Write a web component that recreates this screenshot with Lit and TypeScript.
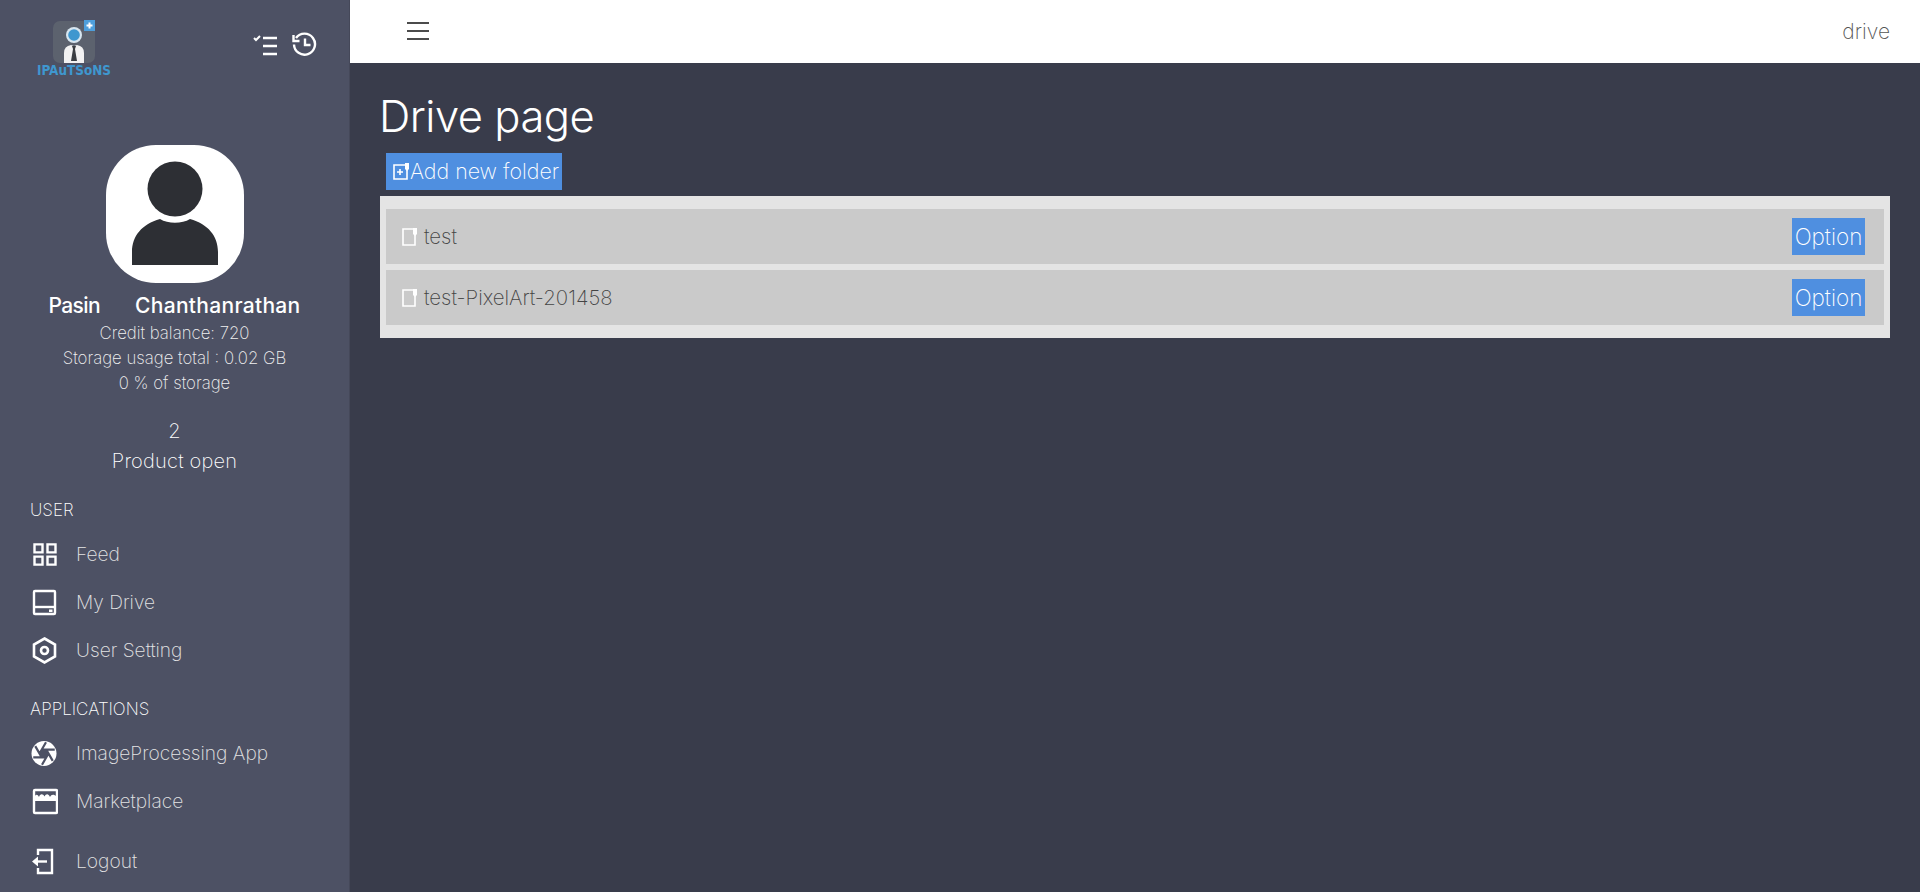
import { LitElement, html, css, svg } from 'lit'
import { customElement } from 'lit/decorators.js'

// aperture cuts: one tangent line per hexagon corner
const apertureCuts = [0, 60, 120, 180, 240, 300].map((deg) => {
  const a = (deg * Math.PI) / 180
  const b = a + (Math.PI * 2) / 3
  const x = 13 + 4.5 * Math.cos(a)
  const y = 13.5 + 4.5 * Math.sin(a)
  return `M${x.toFixed(2)} ${y.toFixed(2)}L${(x + 13 * Math.cos(b)).toFixed(2)} ${(y + 13 * Math.sin(b)).toFixed(2)}`
})

const icons = {
  feed: svg`<path d="M3.500 3.400h8v8h-8zM16.500 3.400h8v8h-8zM3.500 15.600h8v8h-8zM16.500 15.600h8v8h-8z" fill="none" stroke="currentColor" stroke-width="2.400"/>`,
  drive: svg`<rect x="3" y="2" width="21" height="23" rx="1" fill="none" stroke="currentColor" stroke-width="2.400"/><path d="M3 18h21" stroke="currentColor" stroke-width="2.400"/><rect x="18" y="20.500" width="3.500" height="2.500" fill="currentColor"/>`,
  setting: svg`<path d="M13.500 1.500l10.500 6v12l-10.500 6-10.500-6v-12z" fill="none" stroke="currentColor" stroke-width="2.600"/><circle cx="13.500" cy="13.500" r="3.500" fill="none" stroke="currentColor" stroke-width="2.600"/>`,
  aperture: svg`<circle cx="13" cy="13.500" r="12.500" fill="currentColor"/><path d="${apertureCuts.join('')}" stroke="#4d5164" stroke-width="2.200" fill="none"/><path d="M17.500 13.500l-2.250 3.900h-4.500L8.500 13.500l2.250-3.900h4.500z" fill="#4d5164"/>`,
  market: svg`<rect x="3" y="2" width="23" height="23" rx="1" fill="none" stroke="currentColor" stroke-width="2.400"/><path d="M3 13V9.500c1.500-3.500 3.500-3.500 5-.5 1-3.500 4-3.500 5.500-.5 1.500-3 4-3 5.500.5 1.500-3 3.500-3 7-.5V13z" fill="currentColor"/>`,
  logout: svg`<path d="M7 7V2h14v23H7v-5" fill="none" stroke="currentColor" stroke-width="2.400"/><path d="M16 13.500H6" stroke="currentColor" stroke-width="2.400"/><path d="M1 13.500l6-5v10z" fill="currentColor"/>`,
}

const menuUser = [
  { icon: icons.feed, label: 'Feed' },
  { icon: icons.drive, label: 'My Drive' },
  { icon: icons.setting, label: 'User Setting' },
]
const menuApps = [
  { icon: icons.aperture, label: 'ImageProcessing App' },
  { icon: icons.market, label: 'Marketplace' },
]
const folders = ['test', 'test-PixelArt-201458']

@customElement('app-root')
export class AppRoot extends LitElement {
  static styles = css`
    :host {
      display: flex;
      height: 892px;
      overflow: hidden;
      font-family: Inter, 'Liberation Sans', sans-serif;
      font-weight: 200;
      background: #393c4b;
    }

    .sidebar {
      width: 349px;
      flex: none;
      background: #4d5164;
      border-right: 1px solid #454859;
      color: #fff;
      display: flex;
      flex-direction: column;
    }
    .side-top {
      height: 145px;
      flex: none;
      display: flex;
      justify-content: space-between;
      padding: 20px 32px 0 37px;
      box-sizing: border-box;
    }
    .logo {
      display: flex;
      flex-direction: column;
      align-items: center;
      width: 74px;
    }
    .logo svg { display: block; }
    .logo-text {
      font-family: 'DejaVu Sans', sans-serif;
      font-weight: 700;
      font-stretch: condensed;
      font-size: 13.400px;
      line-height: 13px;
      margin-top: 1px;
      color: #3f97cf;
      white-space: nowrap;
    }
    .top-icons {
      display: flex;
      gap: 15px;
      padding-top: 14px;
      align-items: flex-start;
    }
    .top-icons svg { display: block; }
    .history { margin-top: -2px; }

    .profile {
      display: flex;
      flex-direction: column;
      align-items: center;
    }
    .avatar { display: block; }
    .name {
      margin-top: 9px;
      margin-bottom: 2px;
      height: 27px;
      font-size: 21px;
      line-height: 27px;
      font-weight: 500;
      display: flex;
      gap: 35px;
    }
    .first { letter-spacing: -0.600px; }
    .last { letter-spacing: 0.300px; }
    .line {
      font-size: 16.800px;
      line-height: 25px;
      color: #f0f0f0;
    }
    .count {
      margin-top: 20px;
      font-size: 20px;
      line-height: 30px;
    }
    .count-label {
      font-size: 20px;
      line-height: 30px;
      letter-spacing: 0.200px;
    }

    .section {
      padding-left: 30px;
      font-size: 17px;
      line-height: 24px;
    }
    .section.user { margin-top: 22px; }
    .section.apps { margin-top: 23px; }

    .item {
      display: flex;
      align-items: center;
      height: 48px;
      padding-left: 31px;
      font-size: 19.200px;
      color: #e4e4e4;
    }
    .item svg { flex: none; margin-right: 18px; color: #fff; }
    .item span { margin-bottom: 1px; }
    .menu { margin-top: 8px; }
    .logout { margin-top: 12px; }

    .main {
      flex: 1;
      display: flex;
      flex-direction: column;
      min-width: 0;
    }
    .topbar {
      height: 63px;
      flex: none;
      background: #fff;
      display: flex;
      align-items: center;
      justify-content: space-between;
      padding: 0 30px 0 57px;
      color: #555;
      font-size: 21px;
    }
    .burger { display: block; margin-bottom: 2px; }
    .content {
      padding: 0 30px;
      color: #fff;
    }
    h1 {
      margin: 21px 0 0;
      font-size: 43.500px;
      line-height: 64px;
      font-weight: 350;
      letter-spacing: -0.500px;
      text-indent: -1px;
    }
    .add {
      margin: 5px 0 6px 6px;
      height: 37px;
      width: 176px;
      background: #4f8fe0;
      display: flex;
      align-items: center;
      padding-left: 7px;
      box-sizing: border-box;
      font-size: 21.400px;
      white-space: nowrap;
      gap: 1px;
    }
    .add span { margin-bottom: 2px; }
    .panel {
      background: #e4e4e4;
      padding: 13px 6px;
      display: flex;
      flex-direction: column;
      gap: 6px;
    }
    .row {
      height: 55px;
      background: #cacaca;
      display: flex;
      align-items: center;
      justify-content: space-between;
      padding: 0 19px 0 16px;
      color: #444;
      font-size: 20.400px;
    }
    .row-name {
      display: flex;
      align-items: center;
      gap: 7px;
    }
    .row-name span { margin-bottom: 1px; }
    .option {
      width: 73px;
      height: 37px;
      padding-bottom: 1px;
      box-sizing: border-box;
      background: #4f8fe0;
      color: #fff;
      display: flex;
      align-items: center;
      justify-content: center;
      font-size: 22.500px;
    }
    .doc { display: block; flex: none; }
  `

  private renderItem(it: { icon: unknown; label: string }) {
    return html`<div class="item">
      <svg width="27" height="27" viewBox="0 0 27 27">${it.icon}</svg>
      <span>${it.label}</span>
    </div>`
  }

  private renderDoc() {
    return html`<svg class="doc" width="15" height="18" viewBox="0 0 15 18">
      <path d="M1 1h12v16H1z" fill="none" stroke="#fff" stroke-width="1.600"/>
      <path d="M11 0h4v6l-2 2-2-2z" fill="#fff"/>
    </svg>`
  }

  render() {
    return html`
      <aside class="sidebar">
        <div class="side-top">
          <div class="logo">
            <svg width="42" height="43" viewBox="0 0 42 43">
              <rect x="0" y="1" width="42" height="42" rx="7" fill="#5c626e"/>
              <circle cx="21" cy="15" r="8" fill="#d7e6f0"/>
              <circle cx="21" cy="15" r="5.800" fill="#3f97cf"/>
              <path d="M11 43V33q0-7 7-8l3 1 3-1q7 1 7 8v10z" fill="#f2f2f2"/>
              <path d="M19 26h4l-1 3 2 12h-6l2-12z" fill="#3a3d42"/>
              <rect x="31" y="0" width="11" height="11" fill="#4e9fdc"/>
              <path d="M36.500 2.500v6M33.500 5.500h6" stroke="#fff" stroke-width="2"/>
            </svg>
            <div class="logo-text">IPAuTSoNS</div>
          </div>
          <div class="top-icons">
            <svg width="25" height="22" viewBox="0 0 25 22" fill="none" stroke="#fff">
              <path d="M2 4l2 2 4-4" stroke-width="2"/>
              <path d="M11 4h14M11 12h14M11 20h14" stroke-width="2.400"/>
            </svg>
            <svg class="history" width="25" height="25" viewBox="0 0 25 25" fill="none" stroke="#fff" stroke-width="2.400">
              <path d="M4 6a10.500 10.500 0 1 1-2 6.500"/>
              <path d="M1.500 3v6h6"/>
              <path d="M13 6.500v6.500h5.500"/>
            </svg>
          </div>
        </div>

        <div class="profile">
          <svg class="avatar" width="138" height="138" viewBox="0 0 138 138">
            <rect width="138" height="138" rx="50" fill="#fff"/>
            <circle cx="69" cy="44" r="27.500" fill="#2d2f34"/>
            <path d="M26 120v-13c0-16 10-28 28-33 8 5 22 5 30 0 18 5 28 17 28 33v13z" fill="#2d2f34"/>
          </svg>
          <div class="name"><span class="first">Pasin</span><span class="last">Chanthanrathan</span></div>
          <div class="line">Credit balance: 720</div>
          <div class="line">Storage usage total : 0.02 GB</div>
          <div class="line">0 % of storage</div>
          <div class="count">2</div>
          <div class="count-label">Product open</div>
        </div>

        <div class="section user">USER</div>
        <div class="menu">${menuUser.map((it) => this.renderItem(it))}</div>
        <div class="section apps">APPLICATIONS</div>
        <div class="menu">${menuApps.map((it) => this.renderItem(it))}</div>
        <div class="logout">${this.renderItem({ icon: icons.logout, label: 'Logout' })}</div>
      </aside>

      <div class="main">
        <header class="topbar">
          <svg class="burger" width="22" height="18" viewBox="0 0 22 18" stroke="#111" stroke-width="1.700">
            <path d="M0 1h22M0 9h22M0 17h22"/>
          </svg>
          <span>drive</span>
        </header>
        <div class="content">
          <h1>Drive page</h1>
          <div class="add">
            <svg width="16" height="17" viewBox="0 0 16 17" class="doc">
              <path d="M1 2h13v14H1z" fill="none" stroke="#fff" stroke-width="1.600"/>
              <path d="M12 0h4v6l-2 2-2-2z" fill="#fff"/>
              <path d="M7 6v6M4 9h6" stroke="#fff" stroke-width="1.600"/>
            </svg>
            <span>Add new folder</span>
          </div>
          <div class="panel">
            ${folders.map(
              (f) => html`<div class="row">
                <div class="row-name">${this.renderDoc()}<span>${f}</span></div>
                <div class="option">Option</div>
              </div>`
            )}
          </div>
        </div>
      </div>
    `
  }
}
